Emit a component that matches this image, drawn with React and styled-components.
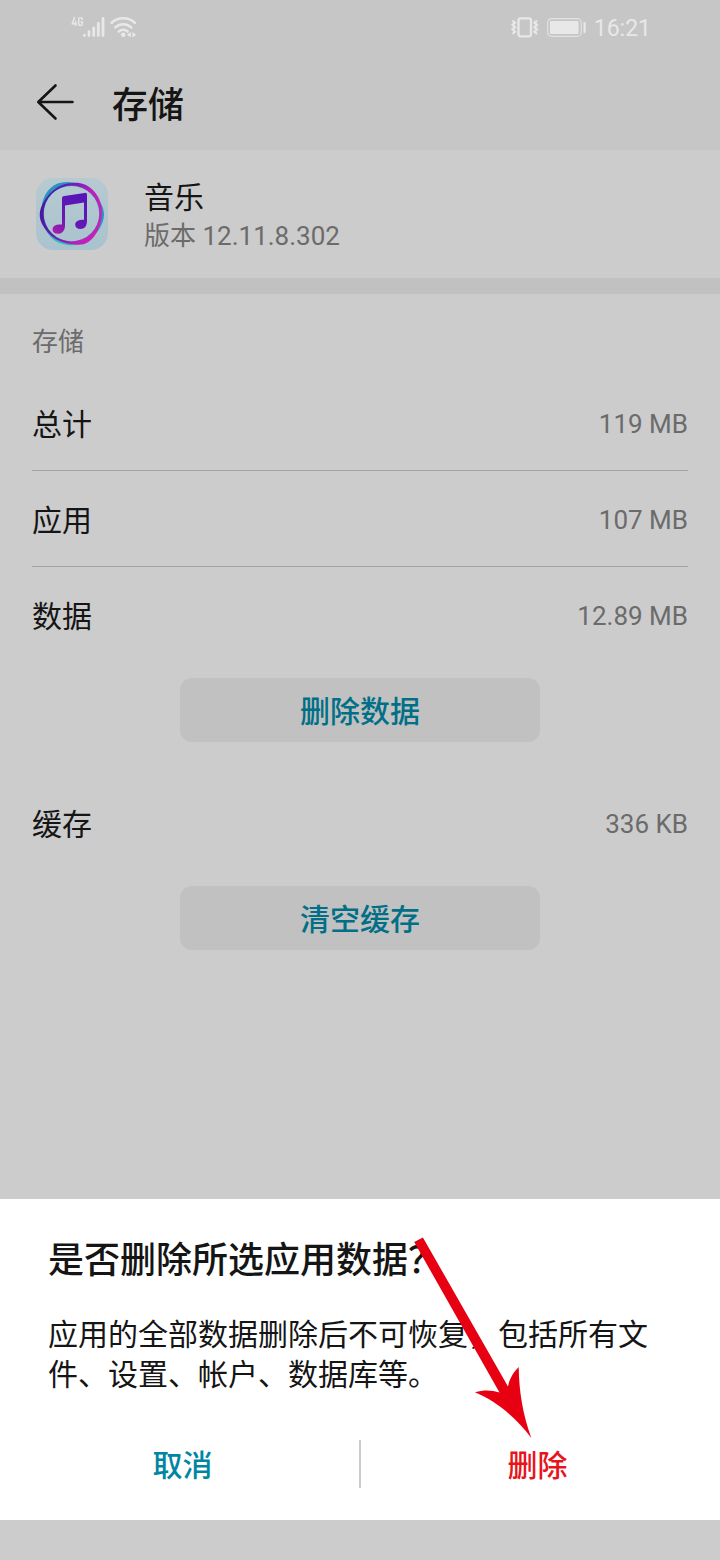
import React, { useState } from "react";
import styled, { createGlobalStyle } from "styled-components";

const GlobalStyle = createGlobalStyle`
  * {
    box-sizing: border-box;
  }

  body {
    margin: 0;
    background: #cccccc;
    color: #151515;
    font-family: Roboto, "Noto Sans CJK SC", sans-serif;
    text-spacing-trim: space-all;
  }

  h1, h2, p, dl, dd {
    margin: 0;
  }

  button {
    border: 0;
    padding: 0;
    background: none;
    font-family: inherit;
    cursor: pointer;
  }
`;

const Page = styled.div`
  display: flex;
  flex-direction: column;
  min-height: 100vh;
`;

const TopBar = styled.header`
  background: #c6c6c6;
`;

const StatusBar = styled.div`
  display: flex;
  align-items: center;
  justify-content: space-between;
  height: 56px;
  padding: 0 69px 0 70px;
  color: #e8e8e8;
`;

const StatusGroup = styled.div`
  display: flex;
  align-items: center;
  gap: ${(props) => props.$gap || "8px"};
`;

const Clock = styled.time`
  padding-top: 2px;
  font-size: 23px;
  line-height: 28px;
`;

const TitleBar = styled.div`
  display: flex;
  align-items: center;
  gap: 36px;
  height: 94px;
  padding: 0 36px;
`;

const BackButton = styled.button`
  display: flex;
  color: #151515;
`;

const Title = styled.h1`
  padding-top: 6px;
  font-size: 36px;
  line-height: 48px;
  font-weight: 500;
`;

const AppInfo = styled.section`
  display: flex;
  align-items: center;
  gap: 36px;
  height: 128px;
  padding: 0 36px;
`;

const AppName = styled.h2`
  padding-top: 4px;
  font-size: 30px;
  line-height: 40px;
  font-weight: 400;
`;

const Version = styled.p`
  color: #6b6b6b;
  font-size: 26px;
  line-height: 36px;
`;

const Band = styled.div`
  height: 16px;
  background: #c1c1c1;
`;

const Storage = styled.main`
  flex: 1;
  padding: 30px 32px 0;
`;

const SectionLabel = styled.h2`
  margin-bottom: 15px;
  color: #6b6b6b;
  font-size: 26px;
  line-height: 36px;
  font-weight: 400;
`;

const Row = styled.dl`
  display: flex;
  align-items: center;
  justify-content: space-between;
  height: 96px;
  border-bottom: 1px solid ${(props) => (props.$divided ? "#a3a3a3" : "transparent")};
`;

const RowName = styled.dt`
  padding-top: 4px;
  font-size: 30px;
  line-height: 40px;
`;

const RowValue = styled.dd`
  padding-top: 2px;
  color: #6b6b6b;
  font-size: 26px;
  line-height: 36px;
`;

const ActionButton = styled.button`
  display: block;
  width: 360px;
  max-width: 100%;
  height: 64px;
  margin: 15px auto 33px;
  padding-top: 4px;
  border-radius: 12px;
  background: #c1c1c1;
  color: #006f87;
  font-size: 30px;
  line-height: 40px;
  font-weight: 500;
`;

const Dialog = styled.section`
  position: relative;
  padding: 38px 0 32px;
  background: #ffffff;
`;

const DialogTitle = styled.h2`
  padding: 0 48px;
  font-size: 36px;
  line-height: 48px;
  font-weight: 500;
`;

const DialogText = styled.p`
  margin: 30px 0 45px;
  padding: 0 48px;
  font-size: 30px;
  line-height: 40px;
`;

const DialogActions = styled.div`
  display: flex;
  align-items: center;
  padding: 0 6px;
`;

const DialogButton = styled.button`
  flex: 1;
  height: 48px;
  padding-top: 4px;
  color: ${(props) => (props.$danger ? "#e8141c" : "#0086a3")};
  font-size: 30px;
  line-height: 40px;
  font-weight: 500;
`;

const Divider = styled.span`
  width: 2px;
  height: 48px;
  background: #cccccc;
`;

// drawn over the dialog, pointing at the delete button
const Pointer = styled.svg`
  position: absolute;
  top: 33px;
  left: 408px;
  pointer-events: none;
`;

const NavBar = styled.footer`
  height: 40px;
  background: #cccccc;
`;

const SignalIcon = () => (
  <svg width="36" height="24" viewBox="0 0 36 24" fill="none" stroke="currentColor">
    <path d="M4.6 1 2.300 7.700h4.600M5.600 4.800v5.200" strokeWidth="1.500" />
    <path d="M12.300 4V3.200c0-1.900-3.600-1.900-3.600 0v4.600c0 2.200 3.600 2.200 3.600 0V6h-1.800" strokeWidth="1.500" />
    <path
      d="M14.400 19.200v0.400M19 15.600v4M23.700 11.900v7.700M28.300 7.400v12.200M33 2.500v17.100"
      strokeWidth="2.800"
      strokeLinecap="round"
    />
  </svg>
);

const WifiIcon = () => (
  <svg width="27" height="24" viewBox="0 0 27 24" fill="none" stroke="currentColor">
    <path
      d="M1.700 6.800C8 0.700 18.500 0.700 24.800 6.800M5.300 11.400c4.600-4.200 11.300-4.200 15.900 0M9 15.500c2.500-2.200 6-2.200 8.500 0"
      strokeWidth="2.600"
      strokeLinecap="round"
    />
    <circle cx="13.200" cy="18.800" r="2.300" fill="currentColor" stroke="none" />
    <path d="M20.800 16v5.600l-3.800-2.800zM22.400 16v5.600l3.800-2.800z" fill="currentColor" stroke="none" />
  </svg>
);

const VibrateIcon = () => (
  <svg width="28" height="22" viewBox="0 0 28 22" fill="none" stroke="currentColor">
    <rect x="7.500" y="1.300" width="12.500" height="18" rx="2" strokeWidth="2.300" />
    <path
      d="M1.500 3.500l2.500 2.200-2.500 2.200L4 10.200l-2.500 2.200L4 14.700l-2.500 2.300M26 3.500l-2.500 2.200L26 7.900l-2.500 2.300 2.500 2.200-2.500 2.300L26 17"
      strokeWidth="2.200"
    />
  </svg>
);

const BatteryIcon = () => (
  <svg width="39" height="20" viewBox="0 0 39 20" fill="none">
    <rect x="0.700" y="0.700" width="33.600" height="17.600" rx="4" stroke="currentColor" strokeWidth="1.200" opacity="0.800" />
    <rect x="3" y="3" width="28.500" height="13" rx="1" fill="currentColor" />
    <path d="M36.500 4h1.200a1 1 0 0 1 1 1v9a1 1 0 0 1-1 1h-1.200z" fill="currentColor" />
  </svg>
);

const BackIcon = () => (
  <svg width="40" height="40" viewBox="0 0 40 40" fill="none" stroke="currentColor">
    <path d="M19.500 2.500 2.300 19 19.500 35.500M2.500 19h34" strokeWidth="2.600" strokeLinecap="round" strokeLinejoin="round" />
  </svg>
);

const MusicIcon = () => (
  <svg width="72" height="72" viewBox="0 0 72 72">
    <defs>
      <linearGradient id="tile" x1="0.200" y1="0" x2="0.300" y2="1">
        <stop offset="0" stopColor="#b7cad1" />
        <stop offset="1" stopColor="#a9c3ce" />
      </linearGradient>
      <linearGradient id="ring" x1="0" y1="0.350" x2="1" y2="0.650">
        <stop offset="0" stopColor="#43189f" />
        <stop offset="0.400" stopColor="#6f1cba" />
        <stop offset="0.700" stopColor="#b81fc0" />
        <stop offset="1" stopColor="#c822b6" />
      </linearGradient>
      <linearGradient id="glow" x1="0" y1="0" x2="0" y2="1">
        <stop offset="0" stopColor="#2b92c4" />
        <stop offset="0.600" stopColor="#2f8fc6" />
        <stop offset="1" stopColor="#36c0b4" />
      </linearGradient>
      <linearGradient id="note" x1="0.700" y1="0" x2="0.100" y2="1">
        <stop offset="0" stopColor="#5714b8" />
        <stop offset="0.600" stopColor="#6618b4" />
        <stop offset="1" stopColor="#a91fa8" />
      </linearGradient>
    </defs>
    <rect width="72" height="72" rx="17" fill="url(#tile)" />
    <path
      fill="url(#glow)"
      fillRule="evenodd"
      d="M31 4C17 4 9 13 6 26c-2 14 2 28 12 36 8 6 20 6 26 4 14-4 24-18 24-30C68 22 50 4 31 4zM35.500 8a27.700 27.700 0 1 0 0 55.400 27.700 27.700 0 0 0 0-55.400z"
    />
    <path
      fill="url(#ring)"
      fillRule="evenodd"
      d="M36 5c15-2 27 9 29.500 24C68 46 58 66 45 66.500 28 68 13 60 6 46 1 36 5 27 11 19 18 10 25 6 36 5zM35.500 7.500a28 28 0 1 0 0 56 28 28 0 0 0 0-56z"
    />
    <path
      fill="url(#note)"
      d="M26 20.500c0-1.600.7-2.300 2.200-2.600l20.500-3c1.500-.2 2.300.5 2.300 2V43c0 5-2.500 8-6.600 8-3.200 0-5.200-1.800-5.200-4.200 0-3.500 3.500-5.200 8.800-5V24.500L29 27.500v20c0 5-2.800 8.300-7 8.300-3.500 0-5.500-1.800-5.500-4.300 0-3.500 3.500-5.500 9.500-5z"
    />
  </svg>
);

const StorageRow = ({ name, value, divided }) => (
  <Row $divided={divided}>
    <RowName>{name}</RowName>
    <RowValue>{value}</RowValue>
  </Row>
);

const DeleteDialog = ({ onClose }) => (
  <Dialog role="dialog" aria-labelledby="dialog-title">
    <DialogTitle id="dialog-title">是否删除所选应用数据？</DialogTitle>
    <DialogText>
      应用的全部数据删除后不可恢复，包括所有文件、设置、帐户、数据库等。
    </DialogText>
    <DialogActions>
      <DialogButton type="button" onClick={onClose}>
        取消
      </DialogButton>
      <Divider />
      <DialogButton type="button" $danger onClick={onClose}>
        删除
      </DialogButton>
    </DialogActions>
    <Pointer width="128" height="208" viewBox="0 0 128 208" aria-hidden="true">
      <path
        fill="#e60012"
        d="M6.200 10 14.900 5.500 100 154.500C101 148 105 140.500 110.700 135 111 160 115 183 123.300 206 109 187 90 170 67 160.300 76 157.500 84 158 91.500 160.500z"
      />
    </Pointer>
  </Dialog>
);

export default function App() {
  const [open, setOpen] = useState(true);

  return (
    <Page>
      <GlobalStyle />
      <TopBar>
        <StatusBar>
          <StatusGroup $gap="4px">
            <SignalIcon />
            <WifiIcon />
          </StatusGroup>
          <StatusGroup>
            <VibrateIcon />
            <BatteryIcon />
            <Clock>16:21</Clock>
          </StatusGroup>
        </StatusBar>
        <TitleBar>
          <BackButton type="button" aria-label="返回">
            <BackIcon />
          </BackButton>
          <Title>存储</Title>
        </TitleBar>
      </TopBar>
      <AppInfo>
        <MusicIcon />
        <div>
          <AppName>音乐</AppName>
          <Version>版本 12.11.8.302</Version>
        </div>
      </AppInfo>
      <Band />
      <Storage>
        <SectionLabel>存储</SectionLabel>
        <StorageRow name="总计" value="119 MB" divided />
        <StorageRow name="应用" value="107 MB" divided />
        <StorageRow name="数据" value="12.89 MB" />
        <ActionButton type="button" onClick={() => setOpen(true)}>
          删除数据
        </ActionButton>
        <StorageRow name="缓存" value="336 KB" />
        <ActionButton type="button">清空缓存</ActionButton>
      </Storage>
      {open && <DeleteDialog onClose={() => setOpen(false)} />}
      <NavBar />
    </Page>
  );
}
